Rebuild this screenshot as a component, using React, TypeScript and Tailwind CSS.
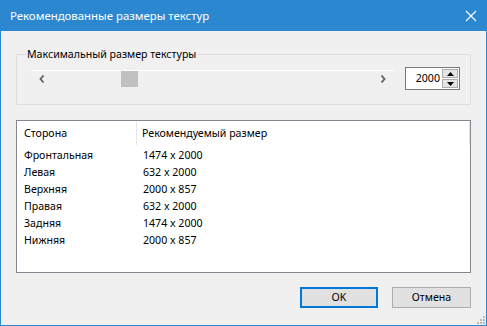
import React from "react";

const rows: [string, string][] = [
  ["Фронтальная", "1474 x 2000"],
  ["Левая", "632 x 2000"],
  ["Верхняя", "2000 x 857"],
  ["Правая", "632 x 2000"],
  ["Задняя", "1474 x 2000"],
  ["Нижняя", "2000 x 857"],
];

export default function App() {
  return (
    <div
      className="w-[487px] h-[326px] flex flex-col bg-[#2b88d0] overflow-hidden text-[10.6px] text-black"
      style={{ fontFamily: '"Noto Sans", "Segoe UI", sans-serif' }}
    >
      {/* title bar */}
      <div className="h-[31px] flex items-center justify-between pl-[10px] pr-[9px] text-white shrink-0">
        <span className="text-[11.4px] leading-none">Рекомендованные размеры текстур</span>
        <svg width="12" height="12" viewBox="0 0 12 12" className="mr-[1px]">
          <path d="M1 1 L11 11 M11 1 L1 11" stroke="white" strokeWidth="1.1" />
        </svg>
      </div>
      {/* body */}
      <div className="flex-1 mx-[1px] mb-[1px] bg-[#f0f0f0] flex flex-col px-[15px] relative">
        {/* group box */}
        <div className="mt-[23px] h-[51px] border border-[#dcdcdc] rounded-[1px] relative flex items-start">
          <span className="absolute left-[9px] -top-[9px] bg-[#f0f0f0] px-[1px] leading-[16px]">
            Максимальный размер текстуры
          </span>
          <div className="ml-[14px] mt-[15px] w-[363px] h-[20px] relative">
            <div className="absolute left-0 right-0 top-0 h-[1px] bg-white" />
            <svg width="6" height="8" viewBox="0 0 6 8" className="absolute left-[8px] top-[5px]">
              <path d="M4.5 0.5 L1.5 4 L4.5 7.5" stroke="#606060" strokeWidth="1.8" fill="none" />
            </svg>
            <div className="absolute left-[90px] top-[1px] w-[17px] h-[16px] bg-[#c0c0c0]" />
            <svg width="6" height="8" viewBox="0 0 6 8" className="absolute left-[349px] top-[5px]">
              <path d="M1.5 0.5 L4.5 4 L1.5 7.5" stroke="#606060" strokeWidth="1.8" fill="none" />
            </svg>
          </div>
          <div className="ml-[11px] mt-[12px] flex h-[23px] w-[55px] border border-[#7a7a7a] bg-white">
            <div className="flex-1 flex items-center justify-end pr-[2px] leading-none">2000</div>
            <div className="w-[17px] flex flex-col gap-[1px] py-[1px] pr-[1px] bg-white">
              <div className="flex-1 bg-[#e5e5e5] border border-[#adadad] flex items-center justify-center">
                <svg width="7" height="4" viewBox="0 0 7 4">
                  <path d="M0 4 L3.5 0 L7 4 Z" fill="#000" />
                </svg>
              </div>
              <div className="flex-1 bg-[#e5e5e5] border border-[#adadad] flex items-center justify-center">
                <svg width="7" height="4" viewBox="0 0 7 4">
                  <path d="M0 0 L3.5 4 L7 0 Z" fill="#000" />
                </svg>
              </div>
            </div>
          </div>
        </div>
        {/* list view */}
        <div className="mt-[15px] h-[153px] border border-[#828790] bg-white flex flex-col">
          <div className="h-[25px] flex items-stretch shrink-0">
            <div className="w-[120px] pl-[7px] flex items-center border-r border-[#e5e5e5] my-[1px]">Сторона</div>
            <div className="flex-1 pl-[5px] flex items-center border-r border-[#e5e5e5] my-[1px]">Рекомендуемый размер</div>
          </div>
          <div className="flex flex-col pt-[1px]">
            {rows.map(([a, b]) => (
              <div key={a} className="h-[17px] flex items-center">
                <div className="w-[120px] pl-[7px]">{a}</div>
                <div className="pl-[6px]">{b}</div>
              </div>
            ))}
          </div>
        </div>
        {/* buttons */}
        <div className="mt-[14px] flex justify-end gap-[14px]">
          <button className="w-[78px] h-[21px] border-2 border-[#0078d7] bg-[#e1e1e1] flex items-center justify-center leading-none">
            OK
          </button>
          <button className="w-[79px] h-[21px] border border-[#adadad] bg-[#e1e1e1] flex items-center justify-center leading-none">
            Отмена
          </button>
        </div>
        {/* size grip */}
        <svg width="8" height="8" viewBox="0 0 8 8" className="absolute right-[1px] bottom-[1px]">
          {[[6, 0], [6, 3], [3, 3], [6, 6], [3, 6], [0, 6]].map(([x, y], i) => (
            <rect key={i} x={x} y={y} width="2" height="2" fill="#bcbcbc" />
          ))}
        </svg>
      </div>
    </div>
  );
}
